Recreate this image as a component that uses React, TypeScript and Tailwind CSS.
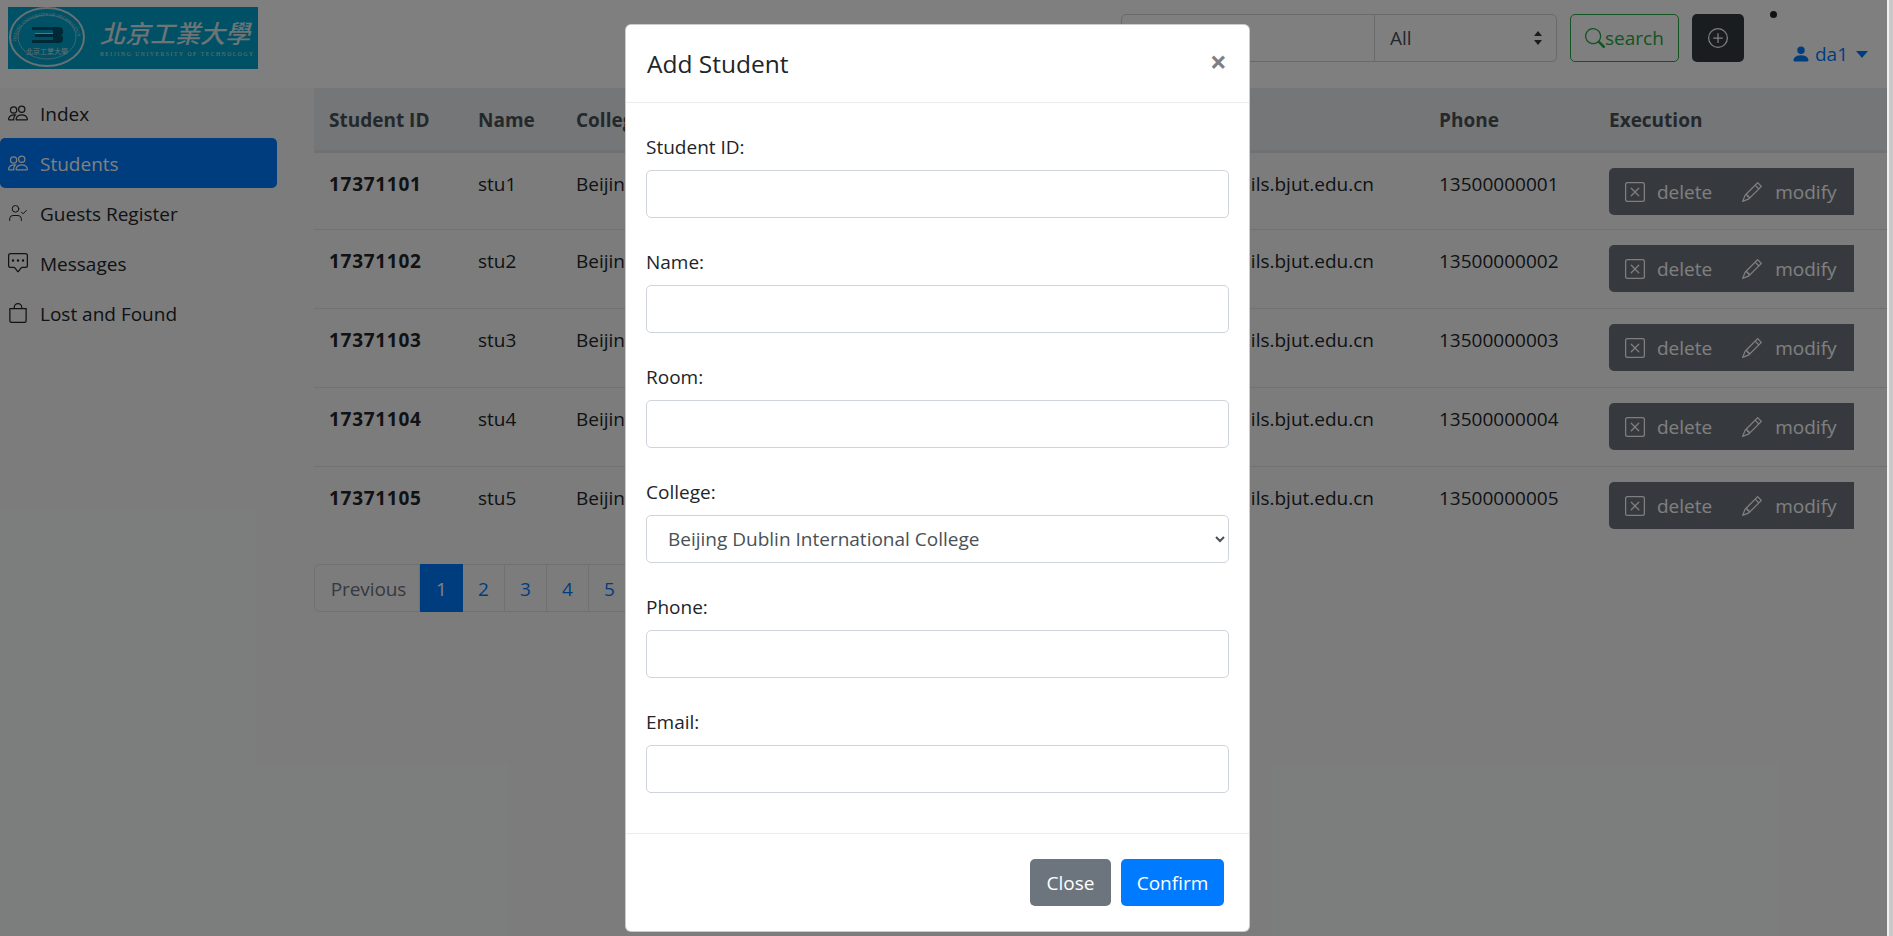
import React from 'react'
import { BsPeople, BsChatSquareDots, BsBag, BsXSquare, BsPencil, BsSearch, BsPlusCircle, BsPersonFill } from 'react-icons/bs'
import { UserCheck } from 'lucide-react'

const students = [1, 2, 3, 4, 5]
const GuestIcon = ({ className }: { className?: string }) => <UserCheck className={className} strokeWidth={1.2} />
const navItems = [
  { label: 'Index', icon: BsPeople },
  { label: 'Students', icon: BsPeople, active: true },
  { label: 'Guests Register', icon: GuestIcon },
  { label: 'Messages', icon: BsChatSquareDots },
  { label: 'Lost and Found', icon: BsBag },
]

const Logo = () => (
  <svg width="250" height="62" viewBox="0 0 250 62" className="block">
    <rect width="250" height="62" fill="#00a3cc" />
    <ellipse cx="39" cy="30" rx="37" ry="29" fill="none" stroke="#cfe0e4" strokeWidth="2" />
    <ellipse cx="39" cy="30" rx="29" ry="22" fill="none" stroke="#cfe0e4" strokeWidth="0.6" />
    <path id="ring" d="M8 34a31 25 0 0 1 62 0" fill="none" />
    <text fontSize="4.5" fill="#cfe0e4" fontFamily="'Liberation Serif', serif">
      <textPath href="#ring" textLength="84">BEIJING UNIVERSITY OF TECHNOLOGY</textPath>
    </text>
    <path d="M24 20h27a4 4 0 0 1 4 4v2a3 3 0 0 1-2 2 3 3 0 0 1 2 2v2a4 4 0 0 1-4 4H24v-3h21v-3H27v-4h18v-3H24z" fill="#00516a" />
    <rect x="27" y="26" width="18" height="1" fill="#cfe0e4" />
    <text x="39" y="47" textAnchor="middle" fontSize="7" fill="#cfe0e4" fontFamily="'Noto Sans CJK TC', sans-serif">北京工業大學</text>
    <text x="92" y="36" fontSize="25" fontWeight="500" fontStyle="italic" fill="#dbe8eb" fontFamily="'Noto Sans CJK TC', sans-serif" textLength="150">北京工業大學</text>
    <text x="92" y="49" fontSize="5.5" fill="#cfe0e4" fontFamily="'Liberation Serif', serif" textLength="153">BEIJING UNIVERSITY OF TECHNOLOGY</text>
  </svg>
)

const Field = ({ label, children }: { label: string; children?: React.ReactNode }) => (
  <div className="mb-[29px]">
    <label className="block mb-[8px] h-[30px] leading-[30px]">{label}</label>
    {children ?? <input className="block w-full h-[48px] border border-[#ced4da] rounded-[5px] bg-white" />}
  </div>
)

export default function App() {
  return (
    <div className="relative flex w-[1893px] h-[936px] overflow-hidden text-[#212529] text-[19px] leading-[30px] font-['Open_Sans','Noto_Sans',sans-serif]">
      <div className="relative w-[1887px] flex-none bg-[#f8f9fa]">
        {/* Navbar */}
        <header className="flex items-start h-[88px] pr-[19px] bg-white">
          <div className="ml-2 mt-[7px]">
            <Logo />
          </div>
          <div className="ml-auto mt-[14px] flex w-[437px] h-[48px]">
            <input className="w-[254px] border border-[#ced4da] rounded-l-[5px] bg-white" />
            <div className="relative w-[183px]">
              <select className="appearance-none w-full h-full border border-[#ced4da] rounded-r-[5px] -ml-px bg-white pl-[15px] text-[#495057]">
                <option>All</option>
              </select>
              <svg className="absolute right-[15px] top-[16px]" width="10" height="16" viewBox="0 0 10 16">
                <path d="M5 1l4 5H1zM5 15l4-5H1z" fill="#343a40" />
              </svg>
            </div>
          </div>
          <button className="ml-3 mt-[14px] w-[109px] h-[48px] flex items-center justify-center border border-[#28a745] rounded-[5px] text-[#28a745]">
            <BsSearch className="w-5 h-5" />
            search
          </button>
          <button className="ml-[13px] mt-[14px] w-[52px] h-[48px] flex items-center justify-center rounded-[5px] bg-[#343a40] text-white">
            <BsPlusCircle className="w-5 h-5" />
          </button>
          <div className="ml-[26px] mt-[11px] w-[7px] h-[7px] flex-none rounded-full bg-[#212529]" />
          <div className="ml-[14px] mt-[39px] flex items-center gap-[4px] text-[#007bff]">
            <BsPersonFill className="w-5 h-5" />
            da1
            <span className="ml-1 border-x-[6px] border-x-transparent border-t-[7px] border-t-[#007bff]" />
          </div>
        </header>

        <div className="flex">
          {/* Sidebar */}
          <aside className="w-[314px] flex-none">
            <nav className="w-[277px]">
              {navItems.map(({ label, icon: Icon, active }) => (
                <a key={label} className={`flex items-center h-[50px] pl-2 gap-[12px] rounded-[5px] ${active ? 'bg-[#007bff] text-white' : 'text-[#212529]'}`}>
                  <Icon className="w-5 h-5" />
                  <span className="pt-px">{label}</span>
                </a>
              ))}
            </nav>
          </aside>

          {/* Student table */}
          <main className="flex-1">
            <table className="w-full table-fixed border-collapse text-left">
              <colgroup>
                <col className="w-[149px]" />
                <col className="w-[98px]" />
                <col className="w-[430px]" />
                <col className="w-[100px]" />
                <col className="w-[333px]" />
                <col className="w-[170px]" />
                <col />
              </colgroup>
              <thead className="bg-[#e9ecef] text-[#495057]">
                <tr className="h-[63px] border-b-[3px] border-[#dee2e6]">
                  <th className="px-[15px] pt-[2px]">Student ID</th>
                  <th className="px-[15px] pt-[2px]">Name</th>
                  <th className="px-[15px] pt-[2px]">College</th>
                  <th className="px-[15px] pt-[2px]">Room</th>
                  <th className="px-[15px] pt-[2px]">Email</th>
                  <th className="px-[15px] pt-[2px]">Phone</th>
                  <th className="px-[15px] pt-[2px]">Execution</th>
                </tr>
              </thead>
              <tbody>
                {students.map((n) => (
                  <tr key={n} className="h-[78.75px] border-b last:border-b-0 border-[#dee2e6] align-top">
                    <th className="px-[15px] pt-[16px] pb-0 tracking-[0.7px]">1737110{n}</th>
                    <td className="px-[15px] pt-[16px] pb-0">stu{n}</td>
                    <td className="px-[15px] pt-[16px] pb-0 whitespace-nowrap overflow-hidden">Beijing Dublin International College</td>
                    <td className="px-[15px] pt-[16px] pb-0">10{n}</td>
                    <td className="pt-[16px] pb-0 pr-[50px] text-right whitespace-nowrap">stu{n}@emails.bjut.edu.cn</td>
                    <td className="px-[15px] pt-[16px] pb-0">1350000000{n}</td>
                    <td className="px-[15px] pt-[15px] pb-0">
                      <div className="flex items-center w-[245px] h-[47px] pl-[16px] pt-px rounded-l-[5px] bg-[#6c757d] text-white">
                        <BsXSquare className="w-5 h-5 mr-[12px]" />
                        delete
                        <BsPencil className="w-5 h-5 ml-[30px] mr-[13px]" />
                        modify
                      </div>
                    </td>
                  </tr>
                ))}
              </tbody>
            </table>

            <div className="mt-[19px] flex h-[48px] pt-0 text-[#007bff]">
              <span className="flex items-center justify-center w-[106px] pl-[3px] pt-[2px] border border-[#dee2e6] rounded-l-[5px] text-[#6c757d] tracking-[-0.1px]">Previous</span>
              <span className="flex items-center justify-center w-[43px] pt-[2px] bg-[#007bff] text-white">1</span>
              {[2, 3, 4, 5, 6].map((p) => (
                <span key={p} className="flex items-center justify-center w-[42px] pt-[2px] border border-l-0 border-[#dee2e6]">{p}</span>
              ))}
            </div>
          </main>
        </div>

        {/* Backdrop */}
        <div className="absolute inset-0 bg-black/50" />
      </div>

      {/* Window scrollbar edge */}
      <div className="flex-none w-[2px] bg-[#f0f0f0]" />
      <div className="flex-none w-[4px] bg-[#c8c8c8]" />

      {/* Modal */}
      <div className="absolute left-[625px] top-[24px] w-[625px] h-[908px] flex flex-col bg-white border border-black/20 rounded-[6px]">
        <div className="relative h-[78px] flex-none border-b border-[#e9ecef] pl-[21px] pt-[24px]">
          <h5 className="text-[24.5px] leading-[30px] font-medium">Add Student</h5>
          <span className="absolute right-[22px] top-[19px] text-[30px] leading-[36px] font-bold text-black/50">×</span>
        </div>
        <div className="flex-1 px-[20px] pt-[29px]">
          <Field label="Student ID:" />
          <Field label="Name:" />
          <Field label="Room:" />
          <Field label="College:">
            <select className="block w-full h-[48px] border border-[#ced4da] rounded-[5px] bg-white pl-[17px] text-[#495057]">
              <option>Beijing Dublin International College</option>
            </select>
          </Field>
          <Field label="Phone:" />
          <Field label="Email:" />
        </div>
        <div className="flex-none h-[98px] border-t border-[#e9ecef] flex justify-end gap-[10px] pt-[25px] pr-[25px]">
          <button className="w-[81px] h-[47px] rounded-[5px] bg-[#6c757d] text-white">Close</button>
          <button className="w-[103px] h-[47px] rounded-[5px] bg-[#007bff] text-white">Confirm</button>
        </div>
      </div>
    </div>
  )
}
